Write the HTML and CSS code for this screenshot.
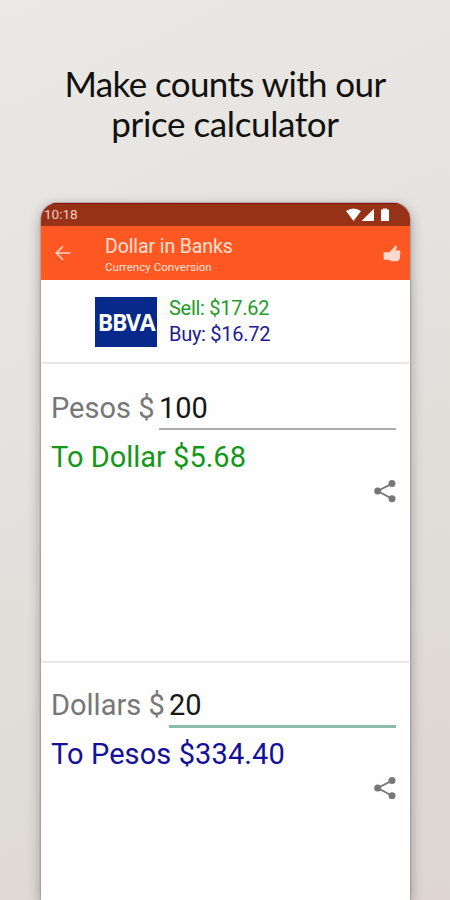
FILE: index.html
```html
<!DOCTYPE html>
<html lang="en">
<head>
<meta charset="utf-8">
<title>Dollar in Banks</title>
<link rel="stylesheet" href="styles.css">
</head>
<body>
<h1 class="headline"><span class="line-one">Make counts with our</span><br><span class="line-two">price calculator</span></h1>
<main class="phone">
  <div class="status">
    <span class="time">10:18</span>
    <svg class="status-icons" width="44" height="14" viewBox="0 0 44 14" fill="#fff"><path d="M0 3Q7.5-2 15 3L7.5 13Z"/><path d="M28 .7V13H15.5Z"/><path d="M35 1.5h2V.5h4v1h2V13h-8V1.5Z"/></svg>
  </div>
  <header class="toolbar">
    <svg class="back" width="16" height="16" viewBox="0 0 16 16" fill="none" stroke="#ffd5c8" stroke-width="1.6"><path d="M15.3 8H1.5M8 1.2 1.2 8 8 14.8"/></svg>
    <div class="titles"><div class="title">Dollar in Banks</div><div class="subtitle">Currency Conversion</div></div>
    <svg class="thumb" width="18" height="17" viewBox="0 0 18 17" fill="#ffd9cc"><path d="M.5 7.3H6.3L11.2 2.2 12.5.4Q14.3.5 13.7 2.4L12.7 5.5 16 5.3Q17.5 5.4 17.3 7L16.9 13.5Q16.4 15.8 14 16.2L8.6 16.3 5.5 14.7H.8Z"/></svg>
  </header>
  <section class="card rates">
    <div class="logo"><span>BBVA</span></div>
    <div class="prices"><div class="sell">Sell: $17.62</div><div class="buy">Buy: $16.72</div></div>
  </section>
  <section class="card convert">
    <div class="entry"><span class="label pesos">Pesos $</span><span class="field">100</span></div>
    <div class="result to-dollar">To Dollar $5.68</div>
    <svg class="share" width="22" height="22" viewBox="0 0 22 22"><path d="M18 3.6 3.7 11 18 18.7" fill="none" stroke="#777" stroke-width="1.8"/><g fill="#777"><circle cx="18" cy="3.6" r="3.5"/><circle cx="3.7" cy="11" r="3.5"/><circle cx="18" cy="18.7" r="3.5"/></g></svg>
  </section>
  <section class="card convert last">
    <div class="entry"><span class="label dollars">Dollars $</span><span class="field active">20</span></div>
    <div class="result to-pesos">To Pesos $334.40</div>
    <svg class="share" width="22" height="22" viewBox="0 0 22 22"><path d="M18 3.6 3.7 11 18 18.7" fill="none" stroke="#777" stroke-width="1.8"/><g fill="#777"><circle cx="18" cy="3.6" r="3.5"/><circle cx="3.7" cy="11" r="3.5"/><circle cx="18" cy="18.7" r="3.5"/></g></svg>
  </section>
</main>
</body>
</html>
```
FILE: styles.css
```css
* { box-sizing: border-box; }
body {
  margin: 0;
  width: 450px;
  height: 900px;
  overflow: hidden;
  display: flex;
  flex-direction: column;
  font-family: Roboto, sans-serif;
  background: linear-gradient(155deg, #ebe9e6 0%, #e5e2df 38%, #dfdbd6 75%, #dfd6d2 100%);
}
.headline {
  margin: 0;
  height: 203px;
  flex: none;
  padding-top: 63px;
  text-align: center;
  font: 400 35px/40px Lato, sans-serif;
  color: #11110f;
  white-space: nowrap;
}
.line-one { letter-spacing: -.62px; }
.line-two { letter-spacing: -.4px; }
.phone {
  width: 369px;
  height: 697px;
  flex: none;
  margin-left: 41px;
  background: #fefefe;
  border-radius: 16px 16px 0 0;
  overflow: hidden;
  box-shadow: 0 4px 14px rgba(0, 0, 0, .32), 0 0 2px rgba(0, 0, 0, .5);
}
.status {
  height: 22.5px;
  padding: 0 20px 0 3px;
  display: flex;
  align-items: center;
  justify-content: space-between;
  background: #973216;
  border-top: 1px solid #85100b;
}
.time { font-size: 13.5px; line-height: 20px; color: #f4cfc9; margin-top: -1px; }
.toolbar {
  height: 54.5px;
  padding: 0 9px 0 14px;
  display: flex;
  align-items: center;
  background: #ff5823;
}
.titles { flex: 1; margin-left: 34px; color: #ffe0d6; padding-top: 5px; }
.title { font-size: 19.5px; line-height: 24px; letter-spacing: -.1px; }
.subtitle { font-size: 11.5px; line-height: 17px; letter-spacing: .05px; }
.thumb { margin-top: 1px; }
.card { border-bottom: 2px solid #e7e7e7; border-radius: 3px; }
.rates { height: 84px; padding: 17px 0 0 54px; display: flex; align-items: flex-start; }
.logo {
  width: 62px;
  height: 50px;
  display: flex;
  align-items: center;
  justify-content: center;
  background: #07298c;
  color: #fff;
  font: 700 23px/50px "Open Sans", sans-serif;
  letter-spacing: -1.3px;
}
.prices { margin-left: 12px; font-size: 20px; line-height: 26px; margin-top: -2px; letter-spacing: -.28px; }
.sell { color: #239b29; }
.buy { color: #211b91; }
.convert { height: 299px; padding: 22px 14px 0 10px; display: flex; flex-direction: column; }
.last { border: 0; padding-top: 20px; }
.entry { display: flex; height: 46px; font-size: 29px; line-height: 45px; }
.label { color: #777; white-space: nowrap; }
.pesos { width: 108px; }
.dollars { width: 118px; }
.field { flex: 1; height: 44px; color: #171717; border-bottom: 2px solid #adadad; }
.field.active { height: 45px; border-bottom: 3px solid #8dbaa9; }
.result { height: 48px; font-size: 29px; line-height: 50px; }
.to-dollar { color: #149718; }
.to-pesos { color: #15109a; letter-spacing: .1px; }
.share { align-self: flex-end; }
```
